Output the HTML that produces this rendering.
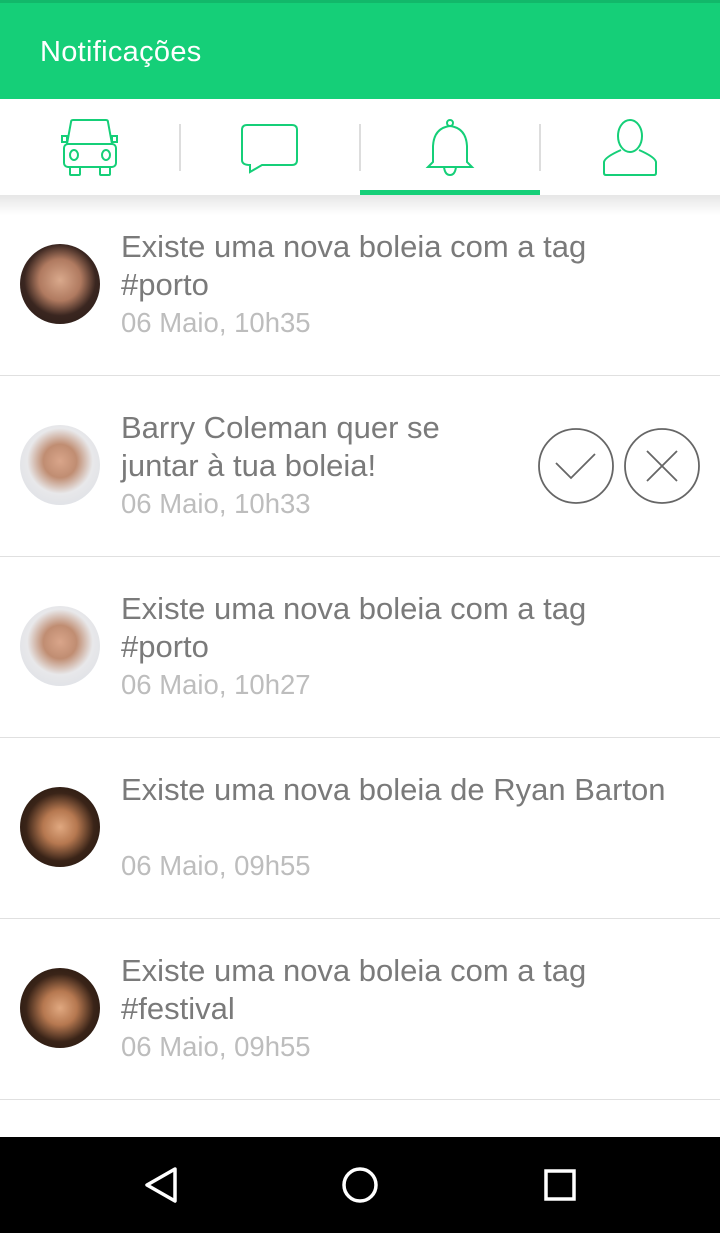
<!DOCTYPE html><html><head><meta charset="utf-8"><style>
body{margin:0;width:720px;height:1233px;position:relative;overflow:hidden;background:#fff;font-family:"Liberation Sans",sans-serif}
.hdr{position:absolute;left:0;top:0;width:720px;height:99px;background:#15cf78;border-top:3px solid #12b86a;box-sizing:border-box}
.hdr span{position:absolute;left:40px;top:33px;color:#fff;font-size:29px;letter-spacing:0.3px}
.tabs{position:absolute;top:0;left:0;width:720px;height:195px}
.ind{position:absolute;left:360px;top:190px;width:180px;height:5px;background:#15cf78}
.shadow{position:absolute;top:195px;left:0;width:720px;height:20px;background:linear-gradient(#e6e6e6,#fff)}
.row{position:absolute;left:0;width:720px;height:180px;border-bottom:1px solid #e0e0e0}
.av{position:absolute;left:20px;top:49px;width:80px;height:80px;border-radius:50%}
.t{position:absolute;left:121px;top:33px;font-size:31px;line-height:38px;color:#7a7a7a;white-space:nowrap;letter-spacing:0}
.d{position:absolute;left:121px;top:112px;font-size:27.5px;color:#bdbdbd;white-space:nowrap;letter-spacing:0}
.nav{position:absolute;left:0;top:1137px;width:720px;height:96px;background:#000}
</style></head><body>
<div class="hdr"><span>Notificações</span></div>
<svg class="tabs" width="720" height="195" fill="none" stroke="#15cf78" stroke-width="2">
<path d="M67 144 L71 122 Q71 120 73 120 H106 Q108 120 108 122 L112 144"/>
<rect x="64" y="144" width="52" height="23" rx="4"/>
<rect x="62" y="136" width="5" height="6"/><rect x="112" y="136" width="5" height="6"/>
<ellipse cx="74" cy="155" rx="4" ry="5"/><ellipse cx="106" cy="155" rx="4" ry="5"/>
<rect x="70" y="167" width="10" height="8" rx="1"/><rect x="100" y="167" width="10" height="8" rx="1"/>
<path d="M247 125 H292 Q297 125 297 130 V160 Q297 165 292 165 H262 L250 172 V165 Q242 165 242 160 V130 Q242 125 247 125Z"/>
<circle cx="450" cy="123" r="3"/>
<path d="M450 126 Q434 128 433 146 V162 L428 167 H472 L467 162 V146 Q466 128 450 126Z"/>
<path d="M444 167 Q445 175 450 175 Q455 175 456 167"/>
<ellipse cx="630" cy="136" rx="12" ry="16"/>
<path d="M621 150 Q605 157 604 162 V173 Q604 175 606 175 H654 Q656 175 656 173 V162 Q655 157 639 150"/>
<g stroke="#ddd"><path d="M180 124 V171 M360 124 V171 M540 124 V171"/></g>
</svg>
<div class="ind"></div>
<div class="shadow"></div>
<div class="row" style="top:195px"><div class="av" style="background:radial-gradient(circle at 50% 45%,#d9a98c 0,#b07a60 35%,#3a2620 60%,#241814 100%)"></div><div class="t">Existe uma nova boleia com a tag<br>#porto</div><div class="d">06 Maio, 10h35</div></div>
<div class="row" style="top:376px"><div class="av" style="background:radial-gradient(circle at 50% 45%,#d9a58a 0,#c08d72 28%,#e8e8ea 55%,#d8dce4 100%)"></div><div class="t">Barry Coleman quer se<br>juntar à tua boleia!</div><div class="d">06 Maio, 10h33</div>
<svg style="position:absolute;left:537px;top:51px" width="164" height="78" viewBox="0 0 164 78" fill="none" stroke="#666" stroke-width="1.8"><circle cx="39" cy="39" r="37"/><path d="M19 36 L34 51 L58 27"/><circle cx="125" cy="39" r="37"/><path d="M110 24 L140 54 M140 24 L110 54"/></svg></div>
<div class="row" style="top:557px"><div class="av" style="background:radial-gradient(circle at 50% 45%,#d9a58a 0,#c08d72 28%,#e8e8ea 55%,#d8dce4 100%)"></div><div class="t">Existe uma nova boleia com a tag<br>#porto</div><div class="d">06 Maio, 10h27</div></div>
<div class="row" style="top:738px"><div class="av" style="background:radial-gradient(circle at 50% 50%,#e0a880 0,#b67850 30%,#3a2418 60%,#1c120c 100%)"></div><div class="t">Existe uma nova boleia de Ryan Barton</div><div class="d">06 Maio, 09h55</div></div>
<div class="row" style="top:919px"><div class="av" style="background:radial-gradient(circle at 50% 50%,#e0a880 0,#b67850 30%,#3a2418 60%,#1c120c 100%)"></div><div class="t">Existe uma nova boleia com a tag<br>#festival</div><div class="d">06 Maio, 09h55</div></div>
<div class="nav"><svg width="720" height="96"><path d="M175 32 L147 48 L175 64Z" fill="none" stroke="#fff" stroke-width="3.5" stroke-linejoin="round"/><circle cx="360" cy="48" r="16" fill="none" stroke="#fff" stroke-width="3.5"/><rect x="546" y="34" width="28" height="28" fill="none" stroke="#fff" stroke-width="3.5"/></svg></div>
</body></html>
